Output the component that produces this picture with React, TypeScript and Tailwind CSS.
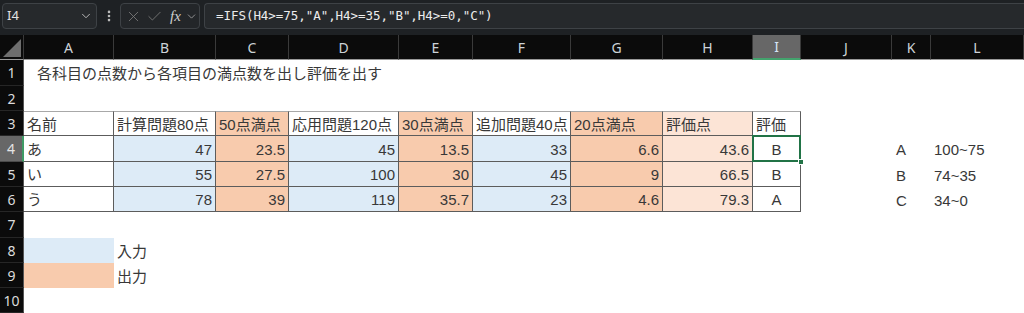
import React from 'react';
import { ChevronDown, X, Check, EllipsisVertical } from 'lucide-react';

type Cell = { t?: string; a?: 'l' | 'r' | 'c'; cls?: string };

const BLUE = 'bg-[#ddebf7]';
const OR = 'bg-[#f8cbad]';
const LOR = 'bg-[#fce4d6]';
const BD = 'border-r border-b border-[#5c5c5c]';

const letters = ['A', 'B', 'C', 'D', 'E', 'F', 'G', 'H', 'I', 'J', 'K', 'L'];

function tableRow(vals: string[], header: boolean): Cell[] {
  const bgs = header
    ? ['bg-white', 'bg-white', OR, 'bg-white', OR, 'bg-white', OR, LOR, 'bg-white']
    : ['bg-white', BLUE, OR, BLUE, OR, BLUE, OR, LOR, 'bg-white'];
  return vals.map((v, i) => ({
    t: v,
    a: header || i === 0 ? 'l' : i === 8 ? 'c' : 'r',
    cls: `${bgs[i]} ${BD} ${header ? 'border-t border-t-[#a8a8a8]' : ''}`,
  }));
}

const rows: Cell[][] = [
  [{ t: '各科目の点数から各項目の満点数を出し評価を出す', a: 'l', cls: 'pl-[13px]' }],
  [],
  tableRow(['名前', '計算問題80点', '50点満点', '応用問題120点', '30点満点', '追加問題40点', '20点満点', '評価点', '評価'], true),
  [...tableRow(['あ', '47', '23.5', '45', '13.5', '33', '6.6', '43.6', 'B'], false), {}, { t: 'A', a: 'l', cls: 'pl-[4px]' }, { t: '100~75', a: 'l' }],
  [...tableRow(['い', '55', '27.5', '100', '30', '45', '9', '66.5', 'B'], false), {}, { t: 'B', a: 'l', cls: 'pl-[4px]' }, { t: '74~35', a: 'l' }],
  [...tableRow(['う', '78', '39', '119', '35.7', '23', '4.6', '79.3', 'A'], false), {}, { t: 'C', a: 'l', cls: 'pl-[4px]' }, { t: '34~0', a: 'l' }],
  [],
  [{ cls: BLUE }, { t: '入力', a: 'l' }],
  [{ cls: OR }, { t: '出力', a: 'l' }],
  [],
];

export default function App() {
  return (
    <div className="w-[1024px] h-[313px] overflow-hidden bg-[#1e2124] font-['Liberation_Sans','Noto_Sans_CJK_JP',sans-serif]">
      {/* Formula bar */}
      <div className="h-[35px] flex items-start pt-[3px] pl-[2px] gap-[4px]">
        <div className="w-[95px] h-[26px] rounded-[4px] border border-[#3e4246] bg-[#26292c] flex items-center justify-between pl-[4px] pr-[3px]">
          <span className="text-[13px] text-[#e2e2e2] font-['Noto_Sans',sans-serif]">I4</span>
          <ChevronDown size={14} className="text-[#c8c8c8]" strokeWidth={1.5} />
        </div>
        <div className="w-[15px] h-[26px] flex items-center justify-center">
          <EllipsisVertical size={14} className="text-[#bdbdbd]" strokeWidth={2.5} />
        </div>
        <div className="w-[80px] h-[26px] rounded-[4px] border border-[#3e4246] bg-[#232629] flex items-center pl-[4px] gap-[4px]">
          <X size={17} className="text-[#7c7c7c]" strokeWidth={1.2} />
          <Check size={17} className="text-[#7c7c7c]" strokeWidth={1.2} />
          <span className="ml-[3px] text-[15px] italic text-[#cfcfcf] font-['Liberation_Serif',serif] leading-none">fx</span>
          <ChevronDown size={13} className="text-[#a8a8a8]" strokeWidth={1.5} />
        </div>
        <div className="flex-1 h-[26px] rounded-l-[4px] border border-r-0 border-[#3e4246] bg-[#26292c] flex items-center pl-[11px]">
          <span className="text-[12.5px] text-[#ececec] font-['DejaVu_Sans_Mono',monospace] tracking-[-0.05px]">
            =IFS(H4&gt;=75,"A",H4&gt;=35,"B",H4&gt;=0,"C")
          </span>
        </div>
      </div>

      {/* Sheet */}
      <div className="grid grid-cols-[24px_90px_102px_73px_110px_74px_98px_92px_90px_48px_91px_39px_93px] grid-rows-[25px_26px_25px_25px_26px_25px_25px_26px_25px_25px_25px] bg-white">
        {/* corner */}
        <div className="bg-[#0b0b0b] border-r border-[#3a3a3a] border-b border-b-[#9a9a9a] relative">
          <svg width="24" height="25" className="absolute inset-0">
            <polygon points="3,22 21,22 21,4" fill="#6e6e6e" />
          </svg>
        </div>
        {letters.map((l) =>
          l === 'I' ? (
            <div key={l} className="bg-[#676767] border-r border-[#3a3a3a] border-b-2 border-b-[#43a36d] flex items-center justify-center text-[14px] text-[#d6e6f6] font-['Noto_Sans',sans-serif]">
              {l}
            </div>
          ) : (
            <div key={l} className="bg-[#0b0b0b] border-r border-[#3a3a3a] border-b border-b-[#9a9a9a] flex items-center justify-center text-[14px] text-[#cdd3d8] font-['Noto_Sans',sans-serif]">
              {l}
            </div>
          )
        )}
        {rows.map((r, ri) => (
          <React.Fragment key={ri}>
            {ri === 3 ? (
              <div className="bg-[#676767] border-r-2 border-r-[#3f9b65] border-b border-b-[#4a4a4a] flex items-center justify-center text-[14px] text-[#e4e4e4] font-['Noto_Sans',sans-serif]">
                {ri + 1}
              </div>
            ) : (
              <div className="bg-[#0b0b0b] border-r border-r-[#555555] border-b border-b-[#262626] flex items-center justify-center text-[14px] text-[#dcdcdc] font-['Noto_Sans',sans-serif]">
                {ri + 1}
              </div>
            )}
            {Array.from({ length: 12 }).map((_, ci) => {
              const c = r[ci] || {};
              const al = c.a === 'r' ? 'justify-end pr-[3px]' : c.a === 'c' ? 'justify-center' : 'justify-start pl-[3px]';
              const selected = ri === 3 && ci === 8;
              return (
                <div
                  key={ci}
                  className={`relative flex items-center whitespace-nowrap overflow-visible text-[15px] leading-none text-[#383838] ${al} ${c.cls || ''}`}
                >
                  <span className="relative z-10 pt-[1px]">{c.t}</span>
                  {selected && (
                    <>
                      <div className="absolute left-[-1px] top-[-1px] right-[-1px] bottom-[-1px] border-2 border-[#217346] z-20" />
                      <div className="absolute right-[-4px] bottom-[-4px] w-[6px] h-[6px] bg-[#217346] border border-white z-30" />
                    </>
                  )}
                </div>
              );
            })}
          </React.Fragment>
        ))}
      </div>
    </div>
  );
}
